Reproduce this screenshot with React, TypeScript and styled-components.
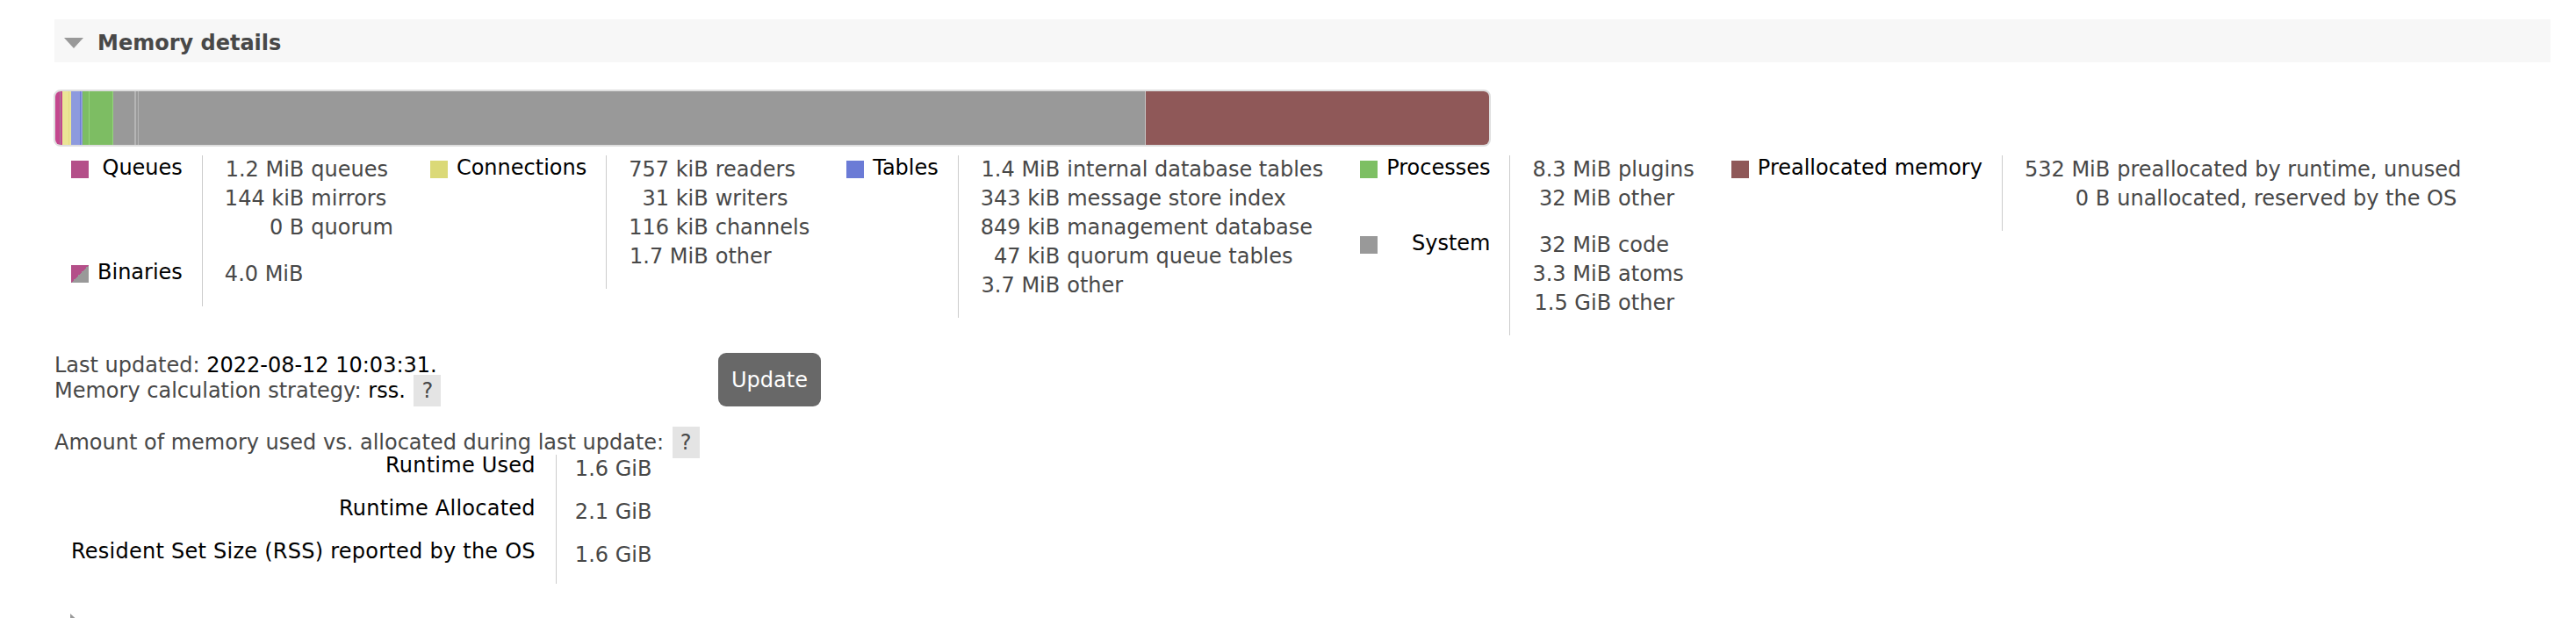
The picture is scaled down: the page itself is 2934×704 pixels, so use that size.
import styled, { createGlobalStyle } from "styled-components";

interface Entry {
  value: string;
  label?: string;
}

interface Group {
  name: string;
  swatch: string;
  entries: Entry[];
}

interface Segment {
  width?: number;
  color: string;
}

const GlobalStyle = createGlobalStyle`
  html, body {
    margin: 0;
    padding: 0;
    background: #fff;
    overflow: hidden;
  }
  body {
    font-family: "DejaVu Sans", Verdana, sans-serif;
    font-size: 24px;
    color: #484848;
  }
`;

const Page = styled.div`
  padding: 22px 29px 0 62px;
`;

const SectionHeader = styled.div`
  display: flex;
  align-items: center;
  height: 49px;
  box-sizing: border-box;
  padding: 4px 0 0 11px;
  background: #f7f7f7;
`;

const Caret = styled.span<{ $open?: boolean }>`
  display: block;
  width: 0;
  height: 0;
  flex: none;
  ${(p) =>
    p.$open
      ? `border-left: 11px solid transparent;
         border-right: 11px solid transparent;
         border-top: 12px solid #999;`
      : `border-top: 11px solid transparent;
         border-bottom: 11px solid transparent;
         border-left: 12px solid #999;`}
`;

const SectionTitle = styled.h2`
  margin: 0 0 0 16px;
  font-size: 24px;
  font-weight: bold;
  color: #484848;
`;

const MemoryBar = styled.div`
  display: flex;
  width: 1637px;
  height: 65px;
  margin: 31px 0 0 -1px;
  box-sizing: border-box;
  border: 2px solid #dedede;
  border-radius: 8px;
  overflow: hidden;
`;

const BarPart = styled.div<{ $color: string; $grow?: boolean }>`
  height: 100%;
  flex: ${(p) => (p.$grow ? "1" : "none")};
  background: ${(p) => p.$color};
`;

const Legend = styled.div`
  display: flex;
  align-items: flex-start;
  margin-top: 10px;
`;

const FactsTable = styled.table<{ $spacing?: number }>`
  border-collapse: collapse;
  border-spacing: 0;
  th {
    letter-spacing: ${(p) => p.$spacing ?? 0}px;
  }
`;

const KeyCell = styled.th<{ $pb: number; $lh: number; $pr: number }>`
  padding: 0 ${(p) => p.$pr}px ${(p) => p.$pb}px 19px;
  text-align: right;
  vertical-align: top;
  font-weight: normal;
  color: #000;
  line-height: ${(p) => p.$lh}px;
  white-space: nowrap;
`;

const ValueCell = styled.td<{ $pb: number; $pl: number; $pr: number }>`
  padding: 0 ${(p) => p.$pr}px ${(p) => p.$pb}px ${(p) => p.$pl}px;
  border-left: 1px solid #cccccc;
  vertical-align: top;
  line-height: 33px;
  color: #484848;
  white-space: nowrap;
`;

const Swatch = styled.span<{ $color: string }>`
  float: left;
  width: 20px;
  height: 20px;
  margin: 6px 10px 0 0;
  background: ${(p) => p.$color};
`;

const ValueGrid = styled.div`
  display: grid;
  grid-template-columns: auto auto;
  column-gap: 8px;
  justify-content: start;
`;

const Amount = styled.span`
  justify-self: end;
`;

const InfoRow = styled.div`
  display: flex;
  align-items: flex-start;
  margin-top: 20px;
`;

const InfoText = styled.div`
  width: 756px;
  line-height: 29px;
`;

const Strong = styled.span`
  color: #000;
`;

const Help = styled.span`
  margin-left: 2px;
  padding: 4px 9px;
  background: #e4e4e4;
  color: #484848;
`;

const UpdateButton = styled.button`
  height: 61px;
  padding: 0 15px;
  border: none;
  border-radius: 9px;
  background: #686868;
  color: #fff;
  font-family: "DejaVu Sans", Verdana, sans-serif;
  font-size: 24px;
`;

const Para = styled.p`
  margin: 27px 0 0;
  line-height: 28px;
`;

const NextSection = styled.div`
  margin-top: 34px;
  padding-left: 18px;
`;

const swatches = {
  queue: "#b44f89",
  binary: "linear-gradient(to bottom right, #b44f89 50%, #999 50%)",
  conn: "#dbd977",
  table: "#6b7bd6",
  proc: "#7dbf63",
  system: "#999999",
  unused: "#8f5858",
};

const bar: Segment[] = [
  { width: 5, color: "#c4478e" },
  { width: 1, color: "#a67b96" },
  { width: 2, color: "#c4478e" },
  { width: 7, color: "#ebe596" },
  { width: 1, color: "#e3dc84" },
  { width: 2, color: "#ebe596" },
  { width: 10, color: "#8d9ade" },
  { width: 1, color: "#6d7cd6" },
  { width: 2, color: "#8d9ade" },
  { width: 7, color: "#7dbd63" },
  { width: 1, color: "#95d57c" },
  { width: 26, color: "#7dbd63" },
  { width: 1, color: "#95d57c" },
  { width: 24, color: "#999999" },
  { width: 2, color: "#b5b5b5" },
  { width: 2, color: "#999999" },
  { width: 1, color: "#b5b5b5" },
  { width: 1146, color: "#999999" },
  { width: 1, color: "#c6c6c6" },
  { color: "#8f5858" },
];

const legend: Group[][] = [
  [
    {
      name: "Queues",
      swatch: swatches.queue,
      entries: [
        { value: "1.2 MiB", label: "queues" },
        { value: "144 kiB", label: "mirrors" },
        { value: "0 B", label: "quorum" },
      ],
    },
    { name: "Binaries", swatch: swatches.binary, entries: [{ value: "4.0 MiB" }] },
  ],
  [
    {
      name: "Connections",
      swatch: swatches.conn,
      entries: [
        { value: "757 kiB", label: "readers" },
        { value: "31 kiB", label: "writers" },
        { value: "116 kiB", label: "channels" },
        { value: "1.7 MiB", label: "other" },
      ],
    },
  ],
  [
    {
      name: "Tables",
      swatch: swatches.table,
      entries: [
        { value: "1.4 MiB", label: "internal database tables" },
        { value: "343 kiB", label: "message store index" },
        { value: "849 kiB", label: "management database" },
        { value: "47 kiB", label: "quorum queue tables" },
        { value: "3.7 MiB", label: "other" },
      ],
    },
  ],
  [
    {
      name: "Processes",
      swatch: swatches.proc,
      entries: [
        { value: "8.3 MiB", label: "plugins" },
        { value: "32 MiB", label: "other" },
      ],
    },
    {
      name: "System",
      swatch: swatches.system,
      entries: [
        { value: "32 MiB", label: "code" },
        { value: "3.3 MiB", label: "atoms" },
        { value: "1.5 GiB", label: "other" },
      ],
    },
  ],
  [
    {
      name: "Preallocated memory",
      swatch: swatches.unused,
      entries: [
        { value: "532 MiB", label: "preallocated by runtime, unused" },
        { value: "0 B", label: "unallocated, reserved by the OS" },
      ],
    },
  ],
];

const usage = [
  { name: "Runtime Used", value: "1.6 GiB" },
  { name: "Runtime Allocated", value: "2.1 GiB" },
  { name: "Resident Set Size (RSS) reported by the OS", value: "1.6 GiB" },
];

function LegendColumn({ groups }: { groups: Group[] }) {
  return (
    <FactsTable>
      <tbody>
        {groups.map((g) => (
          <tr key={g.name}>
            <KeyCell $pb={20} $lh={28} $pr={22}>
              <Swatch $color={g.swatch} />
              {g.name}
            </KeyCell>
            <ValueCell $pb={20} $pl={25} $pr={23}>
              <ValueGrid>
                {g.entries.flatMap((e, i) => [
                  <Amount key={`v${i}`}>{e.value}</Amount>,
                  <span key={`l${i}`}>{e.label ?? ""}</span>,
                ])}
              </ValueGrid>
            </ValueCell>
          </tr>
        ))}
      </tbody>
    </FactsTable>
  );
}

export default function App() {
  return (
    <Page>
      <GlobalStyle />
      <SectionHeader>
        <Caret $open />
        <SectionTitle>Memory details</SectionTitle>
      </SectionHeader>

      <MemoryBar>
        {bar.map((s, i) => (
          <BarPart
            key={i}
            $color={s.color}
            $grow={s.width === undefined}
            style={s.width !== undefined ? { width: s.width } : undefined}
          />
        ))}
      </MemoryBar>

      <Legend>
        {legend.map((groups) => (
          <LegendColumn key={groups[0].name} groups={groups} />
        ))}
      </Legend>

      <InfoRow>
        <InfoText>
          <div>
            Last updated: <Strong>2022-08-12 10:03:31.</Strong>
          </div>
          <div>
            Memory calculation strategy: <Strong>rss.</Strong> <Help>?</Help>
          </div>
        </InfoText>
        <UpdateButton>Update</UpdateButton>
      </InfoRow>

      <Para>
        Amount of memory used vs. allocated during last update: <Help>?</Help>
      </Para>
      <FactsTable $spacing={0.25}>
        <tbody>
          {usage.map((u) => (
            <tr key={u.name}>
              <KeyCell $pb={16} $lh={24} $pr={23}>
                {u.name}
              </KeyCell>
              <ValueCell $pb={16} $pl={21} $pr={26}>
                {u.value}
              </ValueCell>
            </tr>
          ))}
        </tbody>
      </FactsTable>

      <NextSection>
        <Caret />
      </NextSection>
    </Page>
  );
}
